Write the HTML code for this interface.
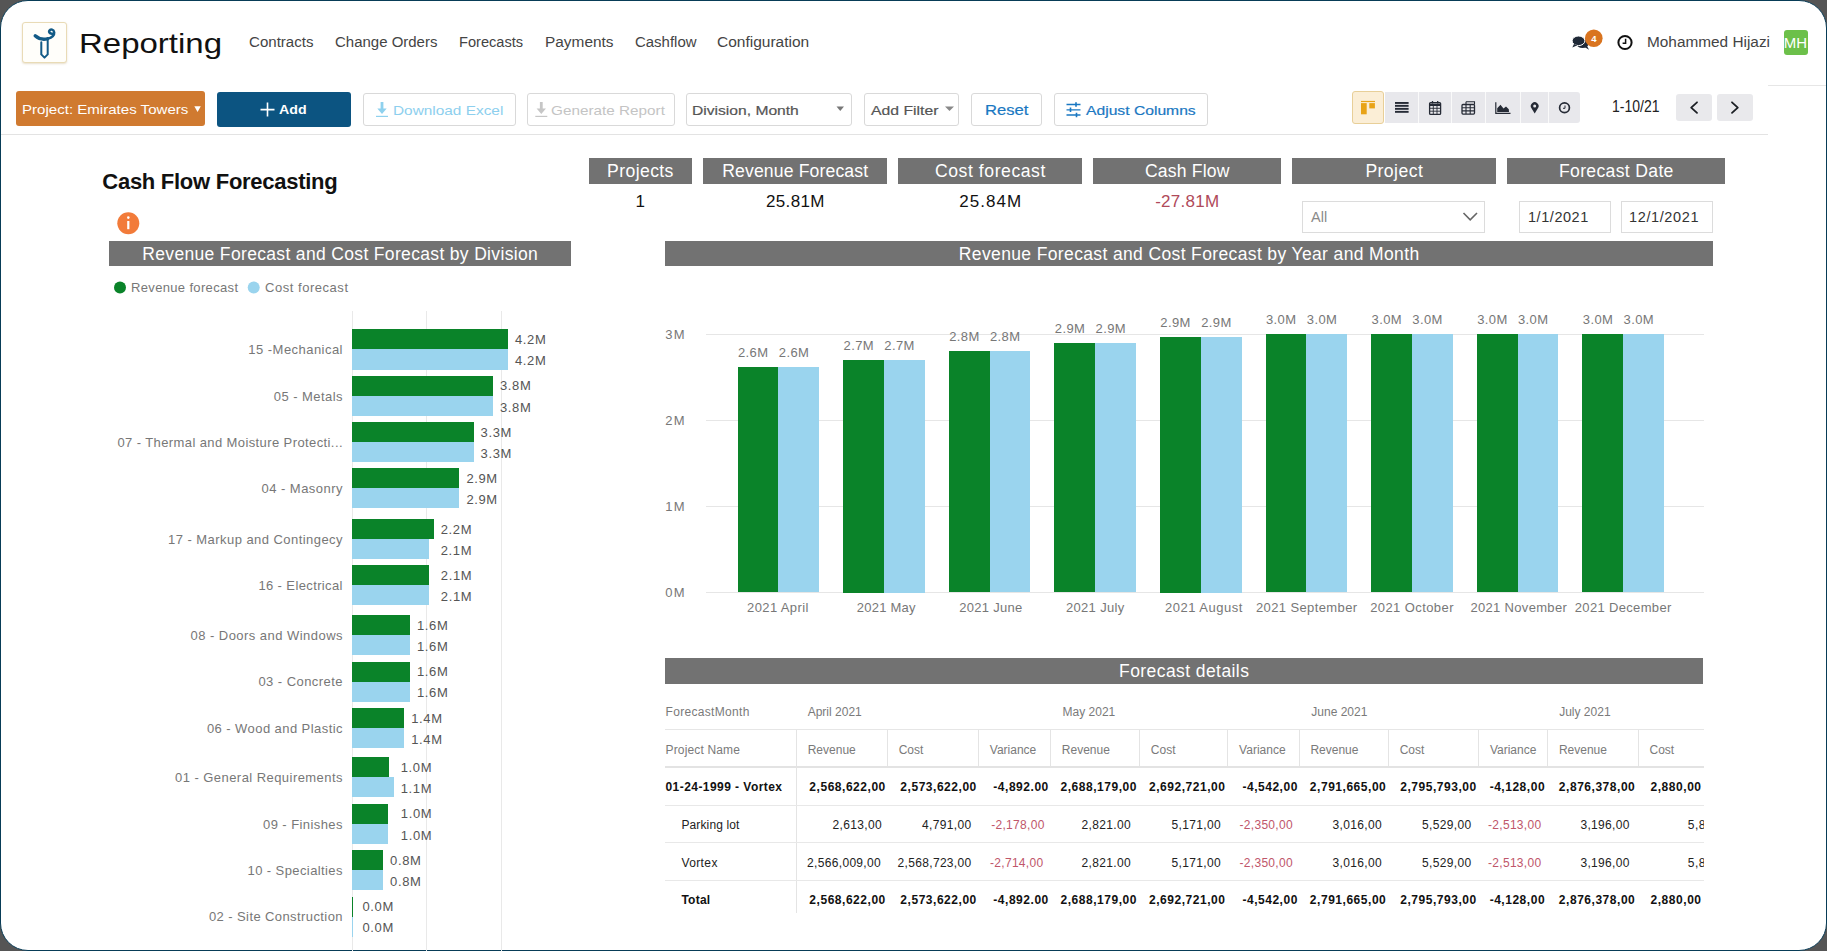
<!DOCTYPE html><html><head><meta charset="utf-8"><style>
html,body{margin:0;padding:0;}
body{width:1827px;height:951px;position:relative;overflow:hidden;background:#555;font-family:"Liberation Sans",sans-serif;}
.frame{position:absolute;left:0;top:0;width:1825px;height:949px;border:1px solid #083c57;border-radius:28px;background:#fff;overflow:hidden;}
.t{position:absolute;white-space:nowrap;}
.r{position:absolute;}
svg{position:absolute;overflow:visible;}
</style></head><body><div class="frame"></div>

<div class="r" style="left:22.00px;top:22.00px;width:45.00px;height:41.00px;background:#fffefa;border:1px solid #e9dbb6;box-sizing:border-box;border-radius:3px;box-shadow:0 1px 2px rgba(180,150,90,.3);"></div>
<svg style="left:0;top:0" width="1827" height="951"><g fill="none" stroke="#125a86" stroke-linecap="round" stroke-linejoin="round">
<path d="M35.2 35.8 C38.5 38.8 43 39.8 47.5 38.8" stroke-width="3.4"/>
<path d="M47.5 38.8 C51 37.8 54.5 35.5 54.2 32.3 C53.8 29.3 50.5 28.6 49.4 30.6 C48.4 32.6 50.8 34.4 53.4 33.4" stroke-width="2.5"/>
<path d="M41.3 42.3 L41.3 54.4 L44.5 57.6 L47.7 54.4 L47.7 39.4" stroke-width="2"/>
</g></svg>
<div class="t" style="top:29.27px;font-size:28.5px;line-height:28.5px;color:#111;left:79.00px;transform:scaleX(1.1572);transform-origin:0 0;">Reporting</div>
<div class="t" style="top:35.35px;font-size:14px;line-height:14px;color:#444;left:249.30px;transform:scaleX(1.0766);transform-origin:0 0;">Contracts</div>
<div class="t" style="top:35.35px;font-size:14px;line-height:14px;color:#444;left:335.00px;transform:scaleX(1.0698);transform-origin:0 0;">Change Orders</div>
<div class="t" style="top:35.35px;font-size:14px;line-height:14px;color:#444;left:459.10px;transform:scaleX(1.0429);transform-origin:0 0;">Forecasts</div>
<div class="t" style="top:35.35px;font-size:14px;line-height:14px;color:#444;left:544.80px;transform:scaleX(1.1005);transform-origin:0 0;">Payments</div>
<div class="t" style="top:35.35px;font-size:14px;line-height:14px;color:#444;left:634.50px;transform:scaleX(1.0681);transform-origin:0 0;">Cashflow</div>
<div class="t" style="top:35.35px;font-size:14px;line-height:14px;color:#444;left:717.20px;transform:scaleX(1.1072);transform-origin:0 0;">Configuration</div>
<svg style="left:0;top:0" width="1827" height="951">
<g fill="#1f2937">
<ellipse cx="1582.5" cy="43.5" rx="6.2" ry="4.6"/>
<path d="M1583 46 L1589 49.8 L1586.5 45 Z"/>
<ellipse cx="1578.5" cy="40.8" rx="6.4" ry="4.8" stroke="#fff" stroke-width="1"/>
<path d="M1574 44 L1572.3 47.6 L1577.5 45.3 Z"/>
</g>
<circle cx="1593.8" cy="38.2" r="8.8" fill="#d9741f"/>
<circle cx="1625" cy="42.5" r="6.6" fill="none" stroke="#111" stroke-width="2"/>
<path d="M1625.6 38.8 L1625.6 43.2 L1622.6 43.2" fill="none" stroke="#111" stroke-width="1.5"/>
</svg>
<div class="t" style="top:33.56px;font-size:9.5px;line-height:9.5px;color:#fff;font-weight:bold;left:1591.16px;">4</div>
<div class="t" style="top:35.15px;font-size:14px;line-height:14px;color:#444;left:1647.00px;transform:scaleX(1.0979);transform-origin:0 0;">Mohammed Hijazi</div>
<div class="r" style="left:1783.50px;top:30.30px;width:24.50px;height:24.70px;background:#6cc04a;border-radius:3px;"></div>
<div class="t" style="top:35.67px;font-size:14.8px;line-height:14.8px;color:#fff;left:1784.29px;transform:scaleX(1.0124);transform-origin:50% 0;">MH</div>
<div class="r" style="left:16.00px;top:91.30px;width:189.00px;height:34.50px;background:#d07a30;border-radius:3px;"></div>
<div class="t" style="top:102.93px;font-size:13.2px;line-height:13.2px;color:#fff;left:21.50px;transform:scaleX(1.1425);transform-origin:0 0;">Project: Emirates Towers</div>
<svg style="left:0;top:0" width="1827" height="951"><path d="M194.3 106.2 L200.8 106.2 L197.55 112 Z" fill="#fff"/></svg>
<div class="r" style="left:217.00px;top:92.30px;width:134.40px;height:34.50px;background:#0c5481;border-radius:3px;"></div>
<svg style="left:0;top:0" width="1827" height="951"><path d="M267.5 102.6 V116.6 M260.5 109.6 H274.5" stroke="#fff" stroke-width="1.6"/></svg>
<div class="t" style="top:103.49px;font-size:13.6px;line-height:13.6px;color:#fff;font-weight:bold;left:279.00px;transform:scaleX(1.0440);transform-origin:0 0;">Add</div>
<div class="r" style="left:363.00px;top:92.70px;width:153.30px;height:33.50px;background:#fff;border:1px solid #d9d9d9;box-sizing:border-box;border-radius:3px;"></div>
<div class="r" style="left:527.40px;top:92.70px;width:147.60px;height:33.50px;background:#fff;border:1px solid #d9d9d9;box-sizing:border-box;border-radius:3px;"></div>
<div class="r" style="left:686.30px;top:92.70px;width:166.10px;height:33.50px;background:#fff;border:1px solid #d9d9d9;box-sizing:border-box;border-radius:3px;"></div>
<div class="r" style="left:864.30px;top:92.70px;width:94.40px;height:33.50px;background:#fff;border:1px solid #d9d9d9;box-sizing:border-box;border-radius:3px;"></div>
<div class="r" style="left:971.00px;top:92.70px;width:71.40px;height:33.50px;background:#fff;border:1px solid #d9d9d9;box-sizing:border-box;border-radius:3px;"></div>
<div class="r" style="left:1053.90px;top:92.70px;width:154.10px;height:33.50px;background:#fff;border:1px solid #d9d9d9;box-sizing:border-box;border-radius:3px;"></div>
<svg style="left:0;top:0" width="1827" height="951">
<g fill="#8fd1ee"><rect x="380.6" y="102" width="2.8" height="7"/><path d="M377.3 108.5 H386.7 L382 114 Z"/><rect x="376" y="115.8" width="12" height="1.2"/></g>
<g fill="#c6c6c6"><rect x="539.9" y="102" width="2.8" height="7"/><path d="M536.6 108.5 H546 L541.3 114 Z"/><rect x="535.3" y="115.8" width="12" height="1.2"/></g>
<path d="M836.5 106.5 H844 L840.25 111 Z" fill="#777"/>
<path d="M945 106.5 H954 L949.5 111 Z" fill="#888"/>
<g stroke="#1a78c2" stroke-width="1.3" fill="none">
<path d="M1066.5 104.5 H1080.5 M1066.5 109.8 H1080.5 M1066.5 115 H1080.5"/>
<path d="M1076 102.3 V106.7 M1070.5 107.6 V112 M1076.5 112.8 V117.2" stroke-width="1.6"/>
</g>
</svg>
<div class="t" style="top:103.57px;font-size:13.5px;line-height:13.5px;color:#8dcfee;left:392.70px;transform:scaleX(1.1394);transform-origin:0 0;">Download Excel</div>
<div class="t" style="top:103.57px;font-size:13.5px;line-height:13.5px;color:#c4c4c4;left:551.40px;transform:scaleX(1.1327);transform-origin:0 0;">Generate Report</div>
<div class="t" style="top:103.57px;font-size:13.5px;line-height:13.5px;color:#555;left:692.00px;-webkit-text-stroke:0.2px currentColor;transform:scaleX(1.1573);transform-origin:0 0;">Division, Month</div>
<div class="t" style="top:103.57px;font-size:13.5px;line-height:13.5px;color:#555;left:871.20px;-webkit-text-stroke:0.2px currentColor;transform:scaleX(1.1667);transform-origin:0 0;">Add Filter</div>
<div class="t" style="top:103.03px;font-size:14.5px;line-height:14.5px;color:#1a78c2;left:985.00px;-webkit-text-stroke:0.2px currentColor;transform:scaleX(1.1458);transform-origin:0 0;">Reset</div>
<div class="t" style="top:103.57px;font-size:13.5px;line-height:13.5px;color:#1a78c2;left:1085.50px;-webkit-text-stroke:0.2px currentColor;transform:scaleX(1.1604);transform-origin:0 0;">Adjust Columns</div>
<div class="r" style="left:1385.00px;top:92.00px;width:194.60px;height:31.00px;background:#e8e8ec;border-radius:0 3px 3px 0;"></div>
<div class="r" style="left:1418.00px;top:92.00px;width:1.20px;height:31.00px;background:#fafafa;"></div>
<div class="r" style="left:1450.70px;top:92.00px;width:1.20px;height:31.00px;background:#fafafa;"></div>
<div class="r" style="left:1484.70px;top:92.00px;width:1.20px;height:31.00px;background:#fafafa;"></div>
<div class="r" style="left:1519.90px;top:92.00px;width:1.20px;height:31.00px;background:#fafafa;"></div>
<div class="r" style="left:1548.00px;top:92.00px;width:1.20px;height:31.00px;background:#fafafa;"></div>
<div class="r" style="left:1351.90px;top:91.30px;width:32.50px;height:32.50px;background:#fbeed6;border:1.3px solid #e8cf98;box-sizing:border-box;border-radius:3px;"></div>
<svg style="left:0;top:0" width="1827" height="951">
<g fill="#e8a317"><rect x="1361" y="100.9" width="14" height="1.2"/><rect x="1361" y="103.1" width="5.7" height="11.2"/><rect x="1369.3" y="103.1" width="5.6" height="5.3"/></g>
<g fill="#262b36"><rect x="1395" y="102" width="13.6" height="1.9"/><rect x="1395" y="104.9" width="13.6" height="1.9"/><rect x="1395" y="107.9" width="13.6" height="1.9"/><rect x="1395" y="110.9" width="13.6" height="1.9"/></g>
<g fill="none" stroke="#262b36">
<rect x="1429.6" y="102.6" width="11" height="11.8" rx="1" stroke-width="1.3"/>
<path d="M1429.6 104.8 H1440.6" stroke-width="2.4"/>
<path d="M1429.6 108.3 H1440.6 M1429.6 111.2 H1440.6 M1433.3 105 V114.4 M1437 105 V114.4" stroke-width="0.9"/>
<path d="M1432.5 101 V103.5 M1437.7 101 V103.5" stroke-width="1.3"/>
<rect x="1462" y="104.5" width="12.5" height="9.6" rx="1" stroke-width="1.3"/>
<path d="M1466 101.8 H1474.5 V104.5 M1466 101.8 V104.5 M1462 107.7 H1474.5 M1462 110.9 H1474.5 M1466 104.5 V114.1 M1470.2 104.5 V114.1" stroke-width="1.1"/>
<path d="M1495.8 102.2 V113.4 H1510.5" stroke-width="1.2"/>
<circle cx="1564.5" cy="107.8" r="4.9" stroke-width="1.7"/>
<path d="M1565 105.5 V108.3 H1563" stroke-width="1"/>
</g>
<path d="M1497.2 112 L1497.2 108.2 L1500.5 104.7 L1503.5 108.5 L1506 106.4 L1508.8 109.3 L1509 112 Z" fill="#262b36"/>
<path d="M1534.7 113.6 L1531.5 108.3 A3.9 3.9 0 1 1 1537.9 108.3 Z" fill="#262b36"/>
<circle cx="1534.7" cy="105.9" r="1.5" fill="#e8e8ec"/>
</svg>
<div class="t" style="top:99.36px;font-size:16px;line-height:16px;color:#222;left:1612.00px;transform:scaleX(0.8753);transform-origin:0 0;">1-10/21</div>
<div class="r" style="left:1676.30px;top:94.00px;width:35.80px;height:26.60px;background:#e9e9ec;border-radius:3px;"></div>
<div class="r" style="left:1716.70px;top:94.00px;width:35.90px;height:26.60px;background:#e9e9ec;border-radius:3px;"></div>
<svg style="left:0;top:0" width="1827" height="951"><g fill="none" stroke="#1b1f24" stroke-width="1.8" stroke-linecap="round" stroke-linejoin="round">
<path d="M1697 102.3 L1691.2 107.6 L1697 112.9"/><path d="M1732 102.3 L1737.8 107.6 L1732 112.9"/></g></svg>
<div class="r" style="left:1.00px;top:133.50px;width:1767.00px;height:1.20px;background:#e3e3e3;"></div>
<div class="r" style="left:1768.00px;top:84.60px;width:58.00px;height:1.00px;background:#e6e6e6;"></div>
<div class="t" style="top:171.08px;font-size:22px;line-height:22px;color:#111;font-weight:bold;letter-spacing:-0.271px;left:102.30px;">Cash Flow Forecasting</div>
<svg style="left:0;top:0" width="1827" height="951"><circle cx="128.3" cy="223.3" r="11" fill="#f27b3a"/><rect x="127.2" y="221" width="2.2" height="8.2" fill="#fff"/><circle cx="128.3" cy="217.6" r="1.3" fill="#fff"/></svg>
<div class="r" style="left:109.20px;top:240.90px;width:461.60px;height:25.40px;background:#727272;"></div>
<div class="t" style="top:245.69px;font-size:17.5px;line-height:17.5px;color:#fff;letter-spacing:0.338px;left:142.25px;">Revenue Forecast and Cost Forecast by Division</div>
<svg style="left:0;top:0" width="1827" height="951"><circle cx="120" cy="287.4" r="6" fill="#0a8329"/><circle cx="253.7" cy="287.4" r="6" fill="#9ad4ee"/></svg>
<div class="t" style="top:281.20px;font-size:13px;line-height:13px;color:#777;letter-spacing:0.341px;left:131.00px;">Revenue forecast</div>
<div class="t" style="top:281.20px;font-size:13px;line-height:13px;color:#777;letter-spacing:0.535px;left:265.00px;">Cost forecast</div>
<div class="r" style="left:352.30px;top:310.50px;width:1.00px;height:640.50px;background:#e9e9e9;"></div>
<div class="r" style="left:426.10px;top:310.50px;width:1.00px;height:640.50px;background:#e9e9e9;"></div>
<div class="r" style="left:500.70px;top:310.50px;width:1.00px;height:640.50px;background:#e9e9e9;"></div>
<div class="r" style="left:351.70px;top:329.40px;width:156.30px;height:20.00px;background:#0a8329;"></div>
<div class="r" style="left:351.70px;top:349.40px;width:156.30px;height:20.20px;background:#9ad4ee;"></div>
<div class="t" style="top:343.20px;font-size:13px;line-height:13px;color:#777;letter-spacing:0.461px;right:1484.04px;">15 -Mechanical</div>
<div class="t" style="top:333.10px;font-size:13px;line-height:13px;color:#555;letter-spacing:0.626px;left:515.00px;">4.2M</div>
<div class="t" style="top:354.20px;font-size:13px;line-height:13px;color:#555;letter-spacing:0.626px;left:515.00px;">4.2M</div>
<div class="r" style="left:351.70px;top:375.70px;width:141.30px;height:20.00px;background:#0a8329;"></div>
<div class="r" style="left:351.70px;top:395.70px;width:141.30px;height:20.20px;background:#9ad4ee;"></div>
<div class="t" style="top:389.50px;font-size:13px;line-height:13px;color:#777;letter-spacing:0.437px;right:1484.06px;">05 - Metals</div>
<div class="t" style="top:379.40px;font-size:13px;line-height:13px;color:#555;letter-spacing:0.626px;left:500.00px;">3.8M</div>
<div class="t" style="top:400.50px;font-size:13px;line-height:13px;color:#555;letter-spacing:0.626px;left:500.00px;">3.8M</div>
<div class="r" style="left:351.70px;top:422.20px;width:121.90px;height:20.00px;background:#0a8329;"></div>
<div class="r" style="left:351.70px;top:442.20px;width:121.90px;height:20.20px;background:#9ad4ee;"></div>
<div class="t" style="top:436.00px;font-size:13px;line-height:13px;color:#777;letter-spacing:0.398px;right:1484.10px;">07 - Thermal and Moisture Protecti...</div>
<div class="t" style="top:425.90px;font-size:13px;line-height:13px;color:#555;letter-spacing:0.626px;left:480.60px;">3.3M</div>
<div class="t" style="top:447.00px;font-size:13px;line-height:13px;color:#555;letter-spacing:0.626px;left:480.60px;">3.3M</div>
<div class="r" style="left:351.70px;top:468.20px;width:107.70px;height:20.00px;background:#0a8329;"></div>
<div class="r" style="left:351.70px;top:488.20px;width:107.70px;height:20.20px;background:#9ad4ee;"></div>
<div class="t" style="top:482.00px;font-size:13px;line-height:13px;color:#777;letter-spacing:0.469px;right:1484.03px;">04 - Masonry</div>
<div class="t" style="top:471.90px;font-size:13px;line-height:13px;color:#555;letter-spacing:0.626px;left:466.40px;">2.9M</div>
<div class="t" style="top:493.00px;font-size:13px;line-height:13px;color:#555;letter-spacing:0.626px;left:466.40px;">2.9M</div>
<div class="r" style="left:351.70px;top:519.20px;width:82.00px;height:20.00px;background:#0a8329;"></div>
<div class="r" style="left:351.70px;top:539.20px;width:77.50px;height:20.20px;background:#9ad4ee;"></div>
<div class="t" style="top:533.00px;font-size:13px;line-height:13px;color:#777;letter-spacing:0.444px;right:1484.06px;">17 - Markup and Contingecy</div>
<div class="t" style="top:522.90px;font-size:13px;line-height:13px;color:#555;letter-spacing:0.626px;left:440.70px;">2.2M</div>
<div class="t" style="top:544.00px;font-size:13px;line-height:13px;color:#555;letter-spacing:0.626px;left:440.70px;">2.1M</div>
<div class="r" style="left:351.70px;top:565.20px;width:77.50px;height:20.00px;background:#0a8329;"></div>
<div class="r" style="left:351.70px;top:585.20px;width:77.50px;height:20.20px;background:#9ad4ee;"></div>
<div class="t" style="top:579.00px;font-size:13px;line-height:13px;color:#777;letter-spacing:0.382px;right:1484.12px;">16 - Electrical</div>
<div class="t" style="top:568.90px;font-size:13px;line-height:13px;color:#555;letter-spacing:0.626px;left:440.80px;">2.1M</div>
<div class="t" style="top:590.00px;font-size:13px;line-height:13px;color:#555;letter-spacing:0.626px;left:440.80px;">2.1M</div>
<div class="r" style="left:351.70px;top:615.10px;width:58.30px;height:20.00px;background:#0a8329;"></div>
<div class="r" style="left:351.70px;top:635.10px;width:58.30px;height:20.20px;background:#9ad4ee;"></div>
<div class="t" style="top:628.90px;font-size:13px;line-height:13px;color:#777;letter-spacing:0.461px;right:1484.04px;">08 - Doors and Windows</div>
<div class="t" style="top:618.80px;font-size:13px;line-height:13px;color:#555;letter-spacing:0.626px;left:417.00px;">1.6M</div>
<div class="t" style="top:639.90px;font-size:13px;line-height:13px;color:#555;letter-spacing:0.626px;left:417.00px;">1.6M</div>
<div class="r" style="left:351.70px;top:661.60px;width:58.30px;height:20.00px;background:#0a8329;"></div>
<div class="r" style="left:351.70px;top:681.60px;width:58.30px;height:20.20px;background:#9ad4ee;"></div>
<div class="t" style="top:675.40px;font-size:13px;line-height:13px;color:#777;letter-spacing:0.446px;right:1484.05px;">03 - Concrete</div>
<div class="t" style="top:665.30px;font-size:13px;line-height:13px;color:#555;letter-spacing:0.626px;left:417.00px;">1.6M</div>
<div class="t" style="top:686.40px;font-size:13px;line-height:13px;color:#555;letter-spacing:0.626px;left:417.00px;">1.6M</div>
<div class="r" style="left:351.70px;top:707.90px;width:52.50px;height:20.00px;background:#0a8329;"></div>
<div class="r" style="left:351.70px;top:727.90px;width:52.50px;height:20.20px;background:#9ad4ee;"></div>
<div class="t" style="top:721.70px;font-size:13px;line-height:13px;color:#777;letter-spacing:0.432px;right:1484.07px;">06 - Wood and Plastic</div>
<div class="t" style="top:711.60px;font-size:13px;line-height:13px;color:#555;letter-spacing:0.626px;left:411.20px;">1.4M</div>
<div class="t" style="top:732.70px;font-size:13px;line-height:13px;color:#555;letter-spacing:0.626px;left:411.20px;">1.4M</div>
<div class="r" style="left:351.70px;top:757.30px;width:37.70px;height:20.00px;background:#0a8329;"></div>
<div class="r" style="left:351.70px;top:777.30px;width:42.00px;height:20.20px;background:#9ad4ee;"></div>
<div class="t" style="top:771.10px;font-size:13px;line-height:13px;color:#777;letter-spacing:0.444px;right:1484.06px;">01 - General Requirements</div>
<div class="t" style="top:761.00px;font-size:13px;line-height:13px;color:#555;letter-spacing:0.626px;left:400.70px;">1.0M</div>
<div class="t" style="top:782.10px;font-size:13px;line-height:13px;color:#555;letter-spacing:0.626px;left:400.70px;">1.1M</div>
<div class="r" style="left:351.70px;top:803.70px;width:36.70px;height:20.00px;background:#0a8329;"></div>
<div class="r" style="left:351.70px;top:823.70px;width:36.70px;height:20.20px;background:#9ad4ee;"></div>
<div class="t" style="top:817.50px;font-size:13px;line-height:13px;color:#777;letter-spacing:0.422px;right:1484.08px;">09 - Finishes</div>
<div class="t" style="top:807.40px;font-size:13px;line-height:13px;color:#555;letter-spacing:0.626px;left:400.80px;">1.0M</div>
<div class="t" style="top:828.50px;font-size:13px;line-height:13px;color:#555;letter-spacing:0.626px;left:400.80px;">1.0M</div>
<div class="r" style="left:351.70px;top:849.90px;width:31.40px;height:20.00px;background:#0a8329;"></div>
<div class="r" style="left:351.70px;top:869.90px;width:31.40px;height:20.20px;background:#9ad4ee;"></div>
<div class="t" style="top:863.70px;font-size:13px;line-height:13px;color:#777;letter-spacing:0.403px;right:1484.10px;">10 - Specialties</div>
<div class="t" style="top:853.60px;font-size:13px;line-height:13px;color:#555;letter-spacing:0.626px;left:390.10px;">0.8M</div>
<div class="t" style="top:874.70px;font-size:13px;line-height:13px;color:#555;letter-spacing:0.626px;left:390.10px;">0.8M</div>
<div class="r" style="left:351.70px;top:896.60px;width:1.20px;height:20.00px;background:#0a8329;"></div>
<div class="r" style="left:351.70px;top:916.60px;width:0.90px;height:20.20px;background:#9ad4ee;"></div>
<div class="t" style="top:910.40px;font-size:13px;line-height:13px;color:#777;letter-spacing:0.405px;right:1484.10px;">02 - Site Construction</div>
<div class="t" style="top:900.30px;font-size:13px;line-height:13px;color:#555;letter-spacing:0.626px;left:362.50px;">0.0M</div>
<div class="t" style="top:921.40px;font-size:13px;line-height:13px;color:#555;letter-spacing:0.626px;left:362.50px;">0.0M</div>
<div class="r" style="left:588.50px;top:158.00px;width:103.50px;height:25.60px;background:#727272;"></div>
<div class="t" style="top:163.30px;font-size:17.6px;line-height:17.6px;color:#fff;letter-spacing:0.403px;left:607.05px;">Projects</div>
<div class="t" style="top:192.61px;font-size:17px;line-height:17px;color:#111;left:635.52px;">1</div>
<div class="r" style="left:703.00px;top:158.00px;width:184.40px;height:25.60px;background:#727272;"></div>
<div class="t" style="top:163.30px;font-size:17.6px;line-height:17.6px;color:#fff;letter-spacing:0.146px;left:722.20px;">Revenue Forecast</div>
<div class="t" style="top:192.61px;font-size:17px;line-height:17px;color:#111;letter-spacing:0.379px;left:765.90px;">25.81M</div>
<div class="r" style="left:898.00px;top:158.00px;width:184.40px;height:25.60px;background:#727272;"></div>
<div class="t" style="top:163.30px;font-size:17.6px;line-height:17.6px;color:#fff;letter-spacing:0.559px;left:935.00px;">Cost forecast</div>
<div class="t" style="top:192.61px;font-size:17px;line-height:17px;color:#111;letter-spacing:1.019px;left:959.30px;">25.84M</div>
<div class="r" style="left:1093.40px;top:158.00px;width:187.60px;height:25.60px;background:#727272;"></div>
<div class="t" style="top:163.30px;font-size:17.6px;line-height:17.6px;color:#fff;letter-spacing:0.170px;left:1144.95px;">Cash Flow</div>
<div class="t" style="top:192.61px;font-size:17px;line-height:17px;color:#b04a5a;letter-spacing:0.273px;left:1155.20px;">-27.81M</div>
<div class="r" style="left:1291.70px;top:158.00px;width:204.80px;height:25.60px;background:#727272;"></div>
<div class="t" style="top:163.30px;font-size:17.6px;line-height:17.6px;color:#fff;letter-spacing:0.437px;left:1365.40px;">Project</div>
<div class="r" style="left:1507.40px;top:158.00px;width:217.60px;height:25.60px;background:#727272;"></div>
<div class="t" style="top:163.30px;font-size:17.6px;line-height:17.6px;color:#fff;letter-spacing:0.330px;left:1558.95px;">Forecast Date</div>
<div class="r" style="left:1301.50px;top:201.30px;width:183.80px;height:31.70px;background:#fff;border:1px solid #dcdcdc;box-sizing:border-box;"></div>
<div class="t" style="top:210.03px;font-size:14.5px;line-height:14.5px;color:#8a8a8a;left:1311.00px;">All</div>
<svg style="left:0;top:0" width="1827" height="951"><path d="M1463.5 213 L1470.2 219.8 L1477 213" fill="none" stroke="#666" stroke-width="1.6"/></svg>
<div class="r" style="left:1519.30px;top:201.30px;width:92.10px;height:31.70px;background:#fff;border:1px solid #dcdcdc;box-sizing:border-box;"></div>
<div class="r" style="left:1620.50px;top:201.30px;width:92.50px;height:31.70px;background:#fff;border:1px solid #dcdcdc;box-sizing:border-box;"></div>
<div class="t" style="top:210.03px;font-size:14.5px;line-height:14.5px;color:#333;letter-spacing:0.551px;left:1528.00px;">1/1/2021</div>
<div class="t" style="top:210.03px;font-size:14.5px;line-height:14.5px;color:#333;letter-spacing:0.624px;left:1629.00px;">12/1/2021</div>
<div class="r" style="left:665.30px;top:241.10px;width:1047.70px;height:25.10px;background:#727272;"></div>
<div class="t" style="top:245.69px;font-size:17.5px;line-height:17.5px;color:#fff;letter-spacing:0.366px;left:958.85px;">Revenue Forecast and Cost Forecast by Year and Month</div>
<div class="r" style="left:705.60px;top:333.50px;width:998.10px;height:1.00px;background:#e6e6e6;"></div>
<div class="t" style="top:327.60px;font-size:13px;line-height:13px;color:#777;letter-spacing:1.084px;right:1141.42px;">3M</div>
<div class="r" style="left:705.60px;top:419.70px;width:998.10px;height:1.00px;background:#e6e6e6;"></div>
<div class="t" style="top:413.80px;font-size:13px;line-height:13px;color:#777;letter-spacing:1.084px;right:1141.42px;">2M</div>
<div class="r" style="left:705.60px;top:506.00px;width:998.10px;height:1.00px;background:#e6e6e6;"></div>
<div class="t" style="top:500.10px;font-size:13px;line-height:13px;color:#777;letter-spacing:1.084px;right:1141.42px;">1M</div>
<div class="r" style="left:705.60px;top:592.00px;width:998.10px;height:1.00px;background:#e6e6e6;"></div>
<div class="t" style="top:586.10px;font-size:13px;line-height:13px;color:#777;letter-spacing:1.084px;right:1141.42px;">0M</div>
<div class="r" style="left:737.60px;top:366.80px;width:40.80px;height:225.70px;background:#0a8329;"></div>
<div class="r" style="left:778.40px;top:366.80px;width:40.80px;height:225.70px;background:#9ad4ee;"></div>
<div class="t" style="top:345.80px;font-size:13px;line-height:13px;color:#777;letter-spacing:0.385px;left:737.97px;">2.6M</div>
<div class="t" style="top:345.80px;font-size:13px;line-height:13px;color:#777;letter-spacing:0.385px;left:778.77px;">2.6M</div>
<div class="t" style="top:601.20px;font-size:13px;line-height:13px;color:#777;letter-spacing:0.376px;left:747.10px;">2021 April</div>
<div class="r" style="left:843.20px;top:359.50px;width:40.80px;height:233.00px;background:#0a8329;"></div>
<div class="r" style="left:884.00px;top:359.50px;width:40.80px;height:233.00px;background:#9ad4ee;"></div>
<div class="t" style="top:338.50px;font-size:13px;line-height:13px;color:#777;letter-spacing:0.385px;left:843.57px;">2.7M</div>
<div class="t" style="top:338.50px;font-size:13px;line-height:13px;color:#777;letter-spacing:0.385px;left:884.37px;">2.7M</div>
<div class="t" style="top:601.20px;font-size:13px;line-height:13px;color:#777;letter-spacing:0.258px;left:856.70px;">2021 May</div>
<div class="r" style="left:948.80px;top:351.10px;width:40.80px;height:241.40px;background:#0a8329;"></div>
<div class="r" style="left:989.60px;top:351.10px;width:40.80px;height:241.40px;background:#9ad4ee;"></div>
<div class="t" style="top:330.10px;font-size:13px;line-height:13px;color:#777;letter-spacing:0.385px;left:949.17px;">2.8M</div>
<div class="t" style="top:330.10px;font-size:13px;line-height:13px;color:#777;letter-spacing:0.385px;left:989.97px;">2.8M</div>
<div class="t" style="top:601.20px;font-size:13px;line-height:13px;color:#777;letter-spacing:0.297px;left:959.20px;">2021 June</div>
<div class="r" style="left:1054.40px;top:343.30px;width:40.80px;height:249.20px;background:#0a8329;"></div>
<div class="r" style="left:1095.20px;top:343.30px;width:40.80px;height:249.20px;background:#9ad4ee;"></div>
<div class="t" style="top:322.30px;font-size:13px;line-height:13px;color:#777;letter-spacing:0.385px;left:1054.77px;">2.9M</div>
<div class="t" style="top:322.30px;font-size:13px;line-height:13px;color:#777;letter-spacing:0.385px;left:1095.57px;">2.9M</div>
<div class="t" style="top:601.20px;font-size:13px;line-height:13px;color:#777;letter-spacing:0.344px;left:1065.90px;">2021 July</div>
<div class="r" style="left:1160.00px;top:337.00px;width:40.80px;height:255.50px;background:#0a8329;"></div>
<div class="r" style="left:1200.80px;top:337.00px;width:40.80px;height:255.50px;background:#9ad4ee;"></div>
<div class="t" style="top:316.00px;font-size:13px;line-height:13px;color:#777;letter-spacing:0.385px;left:1160.37px;">2.9M</div>
<div class="t" style="top:316.00px;font-size:13px;line-height:13px;color:#777;letter-spacing:0.385px;left:1201.17px;">2.9M</div>
<div class="t" style="top:601.20px;font-size:13px;line-height:13px;color:#777;letter-spacing:0.511px;left:1165.00px;">2021 August</div>
<div class="r" style="left:1265.60px;top:333.70px;width:40.80px;height:258.80px;background:#0a8329;"></div>
<div class="r" style="left:1306.40px;top:333.70px;width:40.80px;height:258.80px;background:#9ad4ee;"></div>
<div class="t" style="top:312.70px;font-size:13px;line-height:13px;color:#777;letter-spacing:0.385px;left:1265.97px;">3.0M</div>
<div class="t" style="top:312.70px;font-size:13px;line-height:13px;color:#777;letter-spacing:0.385px;left:1306.77px;">3.0M</div>
<div class="t" style="top:601.20px;font-size:13px;line-height:13px;color:#777;letter-spacing:0.391px;left:1255.90px;">2021 September</div>
<div class="r" style="left:1371.20px;top:333.70px;width:40.80px;height:258.80px;background:#0a8329;"></div>
<div class="r" style="left:1412.00px;top:333.70px;width:40.80px;height:258.80px;background:#9ad4ee;"></div>
<div class="t" style="top:312.70px;font-size:13px;line-height:13px;color:#777;letter-spacing:0.385px;left:1371.57px;">3.0M</div>
<div class="t" style="top:312.70px;font-size:13px;line-height:13px;color:#777;letter-spacing:0.385px;left:1412.37px;">3.0M</div>
<div class="t" style="top:601.20px;font-size:13px;line-height:13px;color:#777;letter-spacing:0.411px;left:1370.20px;">2021 October</div>
<div class="r" style="left:1476.80px;top:333.70px;width:40.80px;height:258.80px;background:#0a8329;"></div>
<div class="r" style="left:1517.60px;top:333.70px;width:40.80px;height:258.80px;background:#9ad4ee;"></div>
<div class="t" style="top:312.70px;font-size:13px;line-height:13px;color:#777;letter-spacing:0.385px;left:1477.17px;">3.0M</div>
<div class="t" style="top:312.70px;font-size:13px;line-height:13px;color:#777;letter-spacing:0.385px;left:1517.97px;">3.0M</div>
<div class="t" style="top:601.20px;font-size:13px;line-height:13px;color:#777;letter-spacing:0.325px;left:1470.40px;">2021 November</div>
<div class="r" style="left:1582.40px;top:333.70px;width:40.80px;height:258.80px;background:#0a8329;"></div>
<div class="r" style="left:1623.20px;top:333.70px;width:40.80px;height:258.80px;background:#9ad4ee;"></div>
<div class="t" style="top:312.70px;font-size:13px;line-height:13px;color:#777;letter-spacing:0.385px;left:1582.77px;">3.0M</div>
<div class="t" style="top:312.70px;font-size:13px;line-height:13px;color:#777;letter-spacing:0.385px;left:1623.57px;">3.0M</div>
<div class="t" style="top:601.20px;font-size:13px;line-height:13px;color:#777;letter-spacing:0.334px;left:1574.80px;">2021 December</div>
<div class="r" style="left:665.20px;top:658.00px;width:1038.30px;height:25.90px;background:#727272;"></div>
<div class="t" style="top:663.19px;font-size:17.5px;line-height:17.5px;color:#fff;letter-spacing:0.418px;left:1119.10px;">Forecast details</div>
<div style="position:absolute;left:665px;top:690px;width:1038.5px;height:240px;overflow:hidden;">
<div class="t" style="top:15.84px;font-size:12px;line-height:12px;color:#7a7a7a;letter-spacing:0.314px;left:0.50px;">ForecastMonth</div>
<div class="t" style="top:15.84px;font-size:12px;line-height:12px;color:#7a7a7a;left:142.70px;">April 2021</div>
<div class="t" style="top:15.84px;font-size:12px;line-height:12px;color:#7a7a7a;left:397.60px;">May 2021</div>
<div class="t" style="top:15.84px;font-size:12px;line-height:12px;color:#7a7a7a;left:646.30px;">June 2021</div>
<div class="t" style="top:15.84px;font-size:12px;line-height:12px;color:#7a7a7a;left:894.20px;">July 2021</div>
<div class="r" style="left:0.00px;top:39.00px;width:1045.00px;height:1.20px;background:#e6e6e6;"></div>
<div class="t" style="top:53.84px;font-size:12px;line-height:12px;color:#7a7a7a;letter-spacing:0.155px;left:0.50px;">Project Name</div>
<div class="r" style="left:130.90px;top:40.00px;width:1.20px;height:36.00px;background:#e4e4e4;"></div>
<div class="t" style="top:53.84px;font-size:12px;line-height:12px;color:#7a7a7a;left:142.70px;">Revenue</div>
<div class="r" style="left:221.90px;top:40.00px;width:1.20px;height:36.00px;background:#e4e4e4;"></div>
<div class="t" style="top:53.84px;font-size:12px;line-height:12px;color:#7a7a7a;left:233.70px;">Cost</div>
<div class="r" style="left:313.00px;top:40.00px;width:1.20px;height:36.00px;background:#e4e4e4;"></div>
<div class="t" style="top:53.84px;font-size:12px;line-height:12px;color:#7a7a7a;left:324.80px;">Variance</div>
<div class="r" style="left:385.00px;top:40.00px;width:1.20px;height:36.00px;background:#e4e4e4;"></div>
<div class="t" style="top:53.84px;font-size:12px;line-height:12px;color:#7a7a7a;left:396.80px;">Revenue</div>
<div class="r" style="left:474.00px;top:40.00px;width:1.20px;height:36.00px;background:#e4e4e4;"></div>
<div class="t" style="top:53.84px;font-size:12px;line-height:12px;color:#7a7a7a;left:485.80px;">Cost</div>
<div class="r" style="left:562.30px;top:40.00px;width:1.20px;height:36.00px;background:#e4e4e4;"></div>
<div class="t" style="top:53.84px;font-size:12px;line-height:12px;color:#7a7a7a;left:574.10px;">Variance</div>
<div class="r" style="left:633.60px;top:40.00px;width:1.20px;height:36.00px;background:#e4e4e4;"></div>
<div class="t" style="top:53.84px;font-size:12px;line-height:12px;color:#7a7a7a;left:645.40px;">Revenue</div>
<div class="r" style="left:722.90px;top:40.00px;width:1.20px;height:36.00px;background:#e4e4e4;"></div>
<div class="t" style="top:53.84px;font-size:12px;line-height:12px;color:#7a7a7a;left:734.70px;">Cost</div>
<div class="r" style="left:813.10px;top:40.00px;width:1.20px;height:36.00px;background:#e4e4e4;"></div>
<div class="t" style="top:53.84px;font-size:12px;line-height:12px;color:#7a7a7a;left:824.90px;">Variance</div>
<div class="r" style="left:882.10px;top:40.00px;width:1.20px;height:36.00px;background:#e4e4e4;"></div>
<div class="t" style="top:53.84px;font-size:12px;line-height:12px;color:#7a7a7a;left:893.90px;">Revenue</div>
<div class="r" style="left:972.70px;top:40.00px;width:1.20px;height:36.00px;background:#e4e4e4;"></div>
<div class="t" style="top:53.84px;font-size:12px;line-height:12px;color:#7a7a7a;left:984.50px;">Cost</div>
<div class="r" style="left:0.00px;top:75.80px;width:1045.00px;height:1.80px;background:#e3e3e3;"></div>
<div class="r" style="left:131.00px;top:77.00px;width:1.30px;height:146.00px;background:#e4e4e4;"></div>
<div class="r" style="left:0.00px;top:114.60px;width:1045.00px;height:1.20px;background:#e8e8e8;"></div>
<div class="r" style="left:0.00px;top:152.00px;width:1045.00px;height:1.20px;background:#e8e8e8;"></div>
<div class="r" style="left:0.00px;top:189.80px;width:1045.00px;height:1.20px;background:#e8e8e8;"></div>
<div class="t" style="top:91.44px;font-size:12px;line-height:12px;color:#111;font-weight:bold;letter-spacing:0.444px;left:0.50px;">01-24-1999 - Vortex</div>
<div class="t" style="top:204.44px;font-size:12px;line-height:12px;color:#111;font-weight:bold;letter-spacing:0.257px;left:16.40px;">Total</div>
<div class="t" style="top:91.44px;font-size:12px;line-height:12px;color:#111;font-weight:bold;letter-spacing:0.532px;left:144.36px;">2,568,622,00</div>
<div class="t" style="top:91.44px;font-size:12px;line-height:12px;color:#111;font-weight:bold;letter-spacing:0.532px;left:235.36px;">2,573,622,00</div>
<div class="t" style="top:91.44px;font-size:12px;line-height:12px;color:#111;font-weight:bold;letter-spacing:0.529px;left:328.33px;">-4,892.00</div>
<div class="t" style="top:91.44px;font-size:12px;line-height:12px;color:#111;font-weight:bold;letter-spacing:0.532px;left:395.56px;">2,688,179,00</div>
<div class="t" style="top:91.44px;font-size:12px;line-height:12px;color:#111;font-weight:bold;letter-spacing:0.532px;left:483.96px;">2,692,721,00</div>
<div class="t" style="top:91.44px;font-size:12px;line-height:12px;color:#111;font-weight:bold;letter-spacing:0.529px;left:577.43px;">-4,542,00</div>
<div class="t" style="top:91.44px;font-size:12px;line-height:12px;color:#111;font-weight:bold;letter-spacing:0.532px;left:644.86px;">2,791,665,00</div>
<div class="t" style="top:91.44px;font-size:12px;line-height:12px;color:#111;font-weight:bold;letter-spacing:0.532px;left:735.26px;">2,795,793,00</div>
<div class="t" style="top:91.44px;font-size:12px;line-height:12px;color:#111;font-weight:bold;letter-spacing:0.529px;left:824.63px;">-4,128,00</div>
<div class="t" style="top:91.44px;font-size:12px;line-height:12px;color:#111;font-weight:bold;letter-spacing:0.532px;left:893.86px;">2,876,378,00</div>
<div class="t" style="top:91.44px;font-size:12px;line-height:12px;color:#111;font-weight:bold;letter-spacing:0.557px;left:985.44px;">2,880,00</div>
<div class="t" style="top:204.44px;font-size:12px;line-height:12px;color:#111;font-weight:bold;letter-spacing:0.532px;left:144.36px;">2,568,622,00</div>
<div class="t" style="top:204.44px;font-size:12px;line-height:12px;color:#111;font-weight:bold;letter-spacing:0.532px;left:235.36px;">2,573,622,00</div>
<div class="t" style="top:204.44px;font-size:12px;line-height:12px;color:#111;font-weight:bold;letter-spacing:0.529px;left:328.33px;">-4,892.00</div>
<div class="t" style="top:204.44px;font-size:12px;line-height:12px;color:#111;font-weight:bold;letter-spacing:0.532px;left:395.56px;">2,688,179,00</div>
<div class="t" style="top:204.44px;font-size:12px;line-height:12px;color:#111;font-weight:bold;letter-spacing:0.532px;left:483.96px;">2,692,721,00</div>
<div class="t" style="top:204.44px;font-size:12px;line-height:12px;color:#111;font-weight:bold;letter-spacing:0.529px;left:577.43px;">-4,542,00</div>
<div class="t" style="top:204.44px;font-size:12px;line-height:12px;color:#111;font-weight:bold;letter-spacing:0.532px;left:644.86px;">2,791,665,00</div>
<div class="t" style="top:204.44px;font-size:12px;line-height:12px;color:#111;font-weight:bold;letter-spacing:0.532px;left:735.26px;">2,795,793,00</div>
<div class="t" style="top:204.44px;font-size:12px;line-height:12px;color:#111;font-weight:bold;letter-spacing:0.529px;left:824.63px;">-4,128,00</div>
<div class="t" style="top:204.44px;font-size:12px;line-height:12px;color:#111;font-weight:bold;letter-spacing:0.532px;left:893.86px;">2,876,378,00</div>
<div class="t" style="top:204.44px;font-size:12px;line-height:12px;color:#111;font-weight:bold;letter-spacing:0.557px;left:985.44px;">2,880,00</div>
<div class="t" style="top:129.14px;font-size:12px;line-height:12px;color:#222;letter-spacing:0.130px;left:16.40px;">Parking lot</div>
<div class="t" style="top:166.84px;font-size:12px;line-height:12px;color:#222;letter-spacing:0.396px;left:16.40px;">Vortex</div>
<div class="t" style="top:129.14px;font-size:12px;line-height:12px;color:#222;letter-spacing:0.334px;left:167.62px;">2,613,00</div>
<div class="t" style="top:129.14px;font-size:12px;line-height:12px;color:#222;letter-spacing:0.334px;left:257.12px;">4,791,00</div>
<div class="t" style="top:129.14px;font-size:12px;line-height:12px;color:#c0566a;letter-spacing:0.317px;left:326.14px;">-2,178,00</div>
<div class="t" style="top:129.14px;font-size:12px;line-height:12px;color:#222;letter-spacing:0.334px;left:416.62px;">2,821.00</div>
<div class="t" style="top:129.14px;font-size:12px;line-height:12px;color:#222;letter-spacing:0.334px;left:506.62px;">5,171,00</div>
<div class="t" style="top:129.14px;font-size:12px;line-height:12px;color:#c0566a;letter-spacing:0.317px;left:574.44px;">-2,350,00</div>
<div class="t" style="top:129.14px;font-size:12px;line-height:12px;color:#222;letter-spacing:0.334px;left:667.52px;">3,016,00</div>
<div class="t" style="top:129.14px;font-size:12px;line-height:12px;color:#222;letter-spacing:0.334px;left:757.02px;">5,529,00</div>
<div class="t" style="top:129.14px;font-size:12px;line-height:12px;color:#c0566a;letter-spacing:0.317px;left:822.94px;">-2,513,00</div>
<div class="t" style="top:129.14px;font-size:12px;line-height:12px;color:#222;letter-spacing:0.334px;left:915.42px;">3,196,00</div>
<div class="t" style="top:129.14px;font-size:12px;line-height:12px;color:#222;letter-spacing:0.417px;left:1022.80px;">5,8</div>
<div class="t" style="top:166.84px;font-size:12px;line-height:12px;color:#222;letter-spacing:0.319px;left:142.11px;">2,566,009,00</div>
<div class="t" style="top:166.84px;font-size:12px;line-height:12px;color:#222;letter-spacing:0.319px;left:232.61px;">2,568,723,00</div>
<div class="t" style="top:166.84px;font-size:12px;line-height:12px;color:#c0566a;letter-spacing:0.317px;left:324.94px;">-2,714,00</div>
<div class="t" style="top:166.84px;font-size:12px;line-height:12px;color:#222;letter-spacing:0.334px;left:416.62px;">2,821.00</div>
<div class="t" style="top:166.84px;font-size:12px;line-height:12px;color:#222;letter-spacing:0.334px;left:506.62px;">5,171,00</div>
<div class="t" style="top:166.84px;font-size:12px;line-height:12px;color:#c0566a;letter-spacing:0.317px;left:574.44px;">-2,350,00</div>
<div class="t" style="top:166.84px;font-size:12px;line-height:12px;color:#222;letter-spacing:0.334px;left:667.52px;">3,016,00</div>
<div class="t" style="top:166.84px;font-size:12px;line-height:12px;color:#222;letter-spacing:0.334px;left:757.02px;">5,529,00</div>
<div class="t" style="top:166.84px;font-size:12px;line-height:12px;color:#c0566a;letter-spacing:0.317px;left:822.94px;">-2,513,00</div>
<div class="t" style="top:166.84px;font-size:12px;line-height:12px;color:#222;letter-spacing:0.334px;left:915.42px;">3,196,00</div>
<div class="t" style="top:166.84px;font-size:12px;line-height:12px;color:#222;letter-spacing:0.417px;left:1022.80px;">5,8</div>
</div>
</body></html>
